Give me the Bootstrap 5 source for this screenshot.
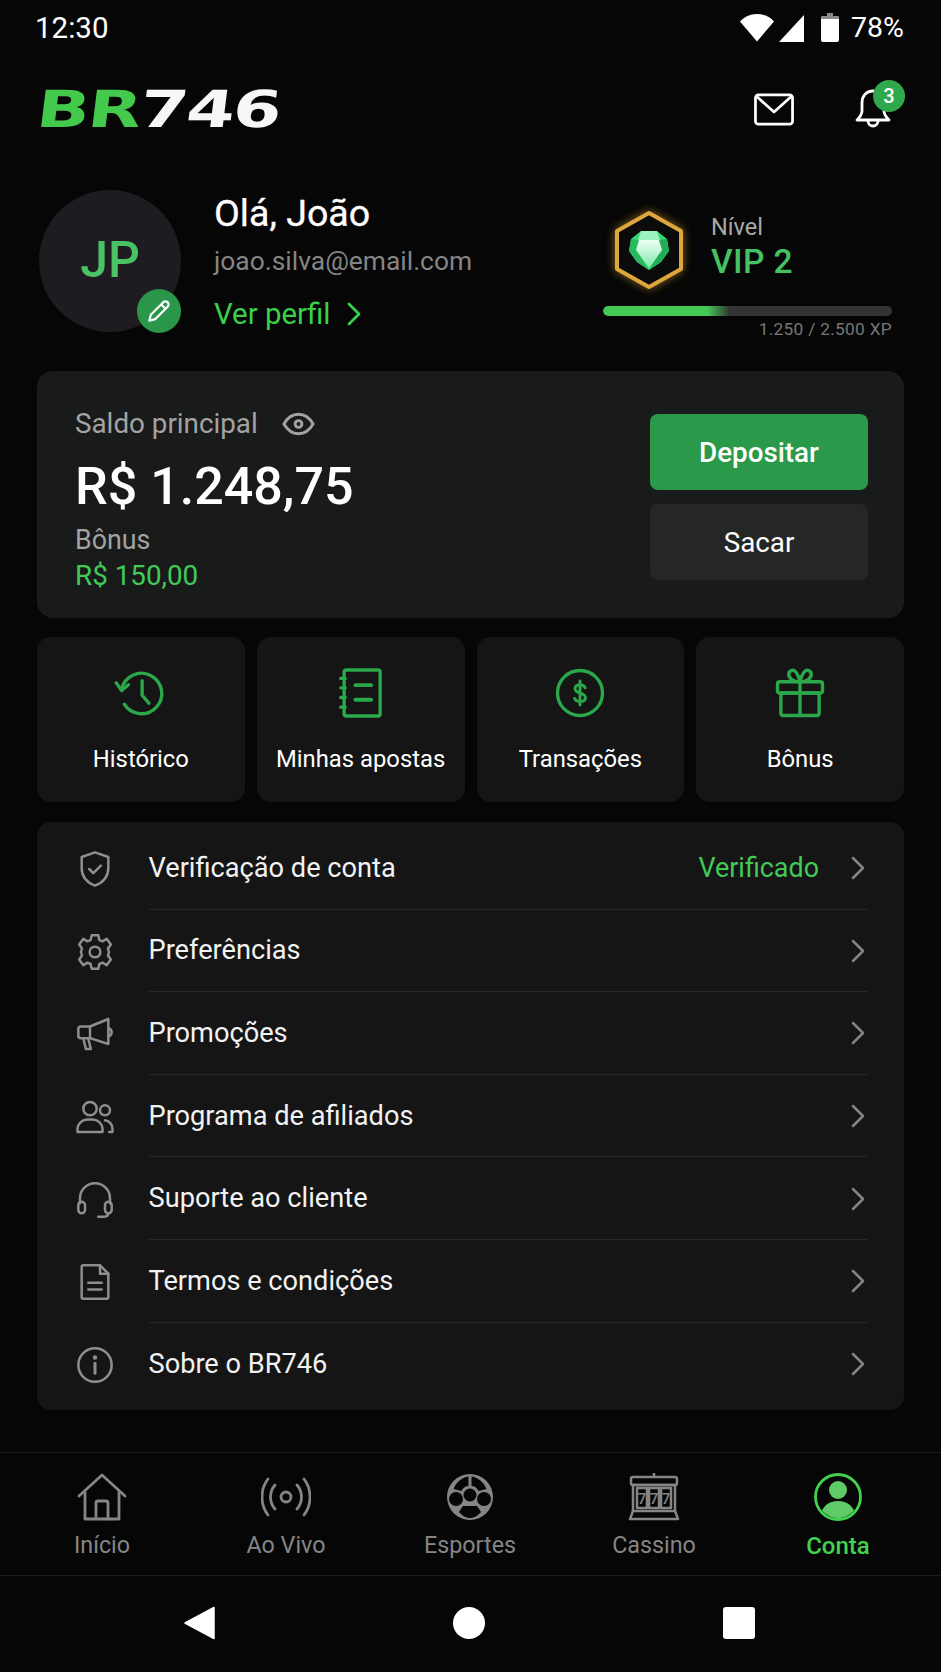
<!DOCTYPE html>
<html lang="pt-BR">
<head>
    <meta charset="UTF-8">
    <meta name="viewport" content="width=device-width, initial-scale=1.0">
    <title>BR746 - Conta</title>
    <link href="https://cdn.jsdelivr.net/npm/bootstrap@5.3.0/dist/css/bootstrap.min.css" rel="stylesheet">
    <style>
        body {
            background-color: #060606;
            color: #f4f4f4;
            font-family: Roboto, "Liberation Sans", sans-serif;
        }
        .app-screen { width: 941px; height: 1672px; overflow: hidden; }
        .status-row { height: 54px; padding: 2px 37px 0 35px; font-size: 29.5px; color: #fff; }
        .status-row .pct { font-size: 28.5px; margin-left: 12px; }
        .top-head { height: 136px; padding: 0 37px 0 37px; padding-bottom: 25px; }
        .brand-logo {
            font-family: "DejaVu Sans", sans-serif;
            font-weight: 700;
            font-size: 51px;
            line-height: 1;
            letter-spacing: -1.5px;
            transform: skewX(-7deg) scaleX(1.37);
            transform-origin: left center;
            color: #f6f6f6;
        }
        .brand-logo span { color: #43c94b; }
        .bell-wrap { position: relative; width: 36px; height: 40px; margin-left: 61px; margin-right: 13px; }
        .bell-count {
            position: absolute;
            top: -9px;
            left: 18px;
            width: 32px;
            height: 32px;
            border-radius: 50%;
            background: #2fa84c;
            font-size: 20px;
            font-weight: 500;
            color: #fff;
        }
        .content-wrap { padding: 0 37px; }
        .profile-row { height: 181px; }
        .avatar-circle {
            position: relative;
            width: 142px;
            height: 142px;
            margin-left: 2px;
            border-radius: 50%;
            background: #1f1c21;
            color: #4bc265;
            font-size: 50px;
            font-weight: 500;
            flex-shrink: 0;
        }
        .avatar-edit {
            position: absolute;
            right: 0;
            bottom: -1px;
            width: 44px;
            height: 44px;
            border-radius: 50%;
            background: #2a964a;
        }
        .profile-info { margin-left: 33px; }
        .hello-name { font-size: 37.6px; line-height: 46px; color: #fff; -webkit-text-stroke: .3px #fff; }
        .hello-mail { font-size: 26.4px; line-height: 30px; margin-top: 10px; color: #858585; }
        .hello-link { font-size: 29.4px; line-height: 34px; margin-top: 21px; color: #3cd04a; }
        .level-box { width: 289px; margin-right: 12px; margin-left: auto; margin-top: 20px; }
        .level-top { padding-left: 11px; height: 96px; }
        .level-gem { filter: drop-shadow(0 0 5px rgba(240, 180, 50, .55)); }
        .level-info { margin-left: 27px; }
        .level-label { font-size: 23.5px; line-height: 28px; margin-top: 3px; color: #a8a8a8; }
        .level-name { font-size: 33.5px; font-weight: 500; line-height: 40px; margin-top: 1px; color: #45c263; letter-spacing: .4px; }
        .xp-track { height: 10px; border-radius: 5px; background: #333; }
        .xp-fill { background: linear-gradient(90deg, #43c956 0, #43c956 82%, #333 100%); border-radius: 5px; }
        .xp-text { font-size: 17.3px; line-height: 20px; margin-top: 3px; color: #777; letter-spacing: .3px; }
        .balance-panel {
            height: 247px;
            padding: 37px 36px 0 38px;
            background: #191b1b;
            border: 0;
            border-radius: 16px;
        }
        .balance-label { font-size: 27.8px; line-height: 32px; color: #a3a3a3; }
        .balance-main { font-size: 52px; font-weight: 500; line-height: 60px; margin-top: 17px; color: #fff; }
        .bonus-label { font-size: 26.8px; line-height: 30px; margin-top: 8px; color: #a3a3a3; }
        .bonus-value { font-size: 27.8px; line-height: 30px; margin-top: 6px; color: #42c957; }
        .balance-btns { width: 218px; margin-top: 6px; gap: 14px; }
        .balance-btns .btn { height: 76px; border: 0; border-radius: 8px; font-size: 27.8px; color: #fff; padding-top: 7px; }
        .btn-deposit { background: #2a9a4a; font-weight: 500; }
        .btn-withdraw { background: #252626; }
        .quick-grid { gap: 12px; margin-top: 19px; }
        .quick-tile {
            flex: 1 1 0;
            height: 165px;
            padding-top: 29px;
            background: #151515;
            border: 0;
            border-radius: 14px;
            color: #fff;
            font-size: 23.8px;
        }
        .quick-tile svg { margin-bottom: 22px; }
        .menu-panel {
            margin-top: 20px;
            padding: 5px 36px 5px 38px;
            background: #151515;
            border-radius: 14px;
            --bs-list-group-bg: transparent;
        }
        .menu-row {
            height: 82.6px;
            padding: 0;
            background: transparent;
            color: #f2f2f2;
            font-size: 27.2px;
        }
        .menu-row .row-ico { width: 73.5px; flex-shrink: 0; }
        .menu-row .row-text { flex: 1 1 auto; height: 100%; padding-top: 1px; border-bottom: 1px solid #272727; }
        .menu-row:last-child .row-text { border-bottom: 0; }
        .ok-tag { color: #42c957; font-size: 26.9px; margin-right: 31px; }
        .ok-chevron { margin-right: 3px; }
        .tab-bar {
            height: 124px;
            margin-top: 42px;
            padding: 0 10px;
            border-top: 1px solid #1d1d1d;
            border-bottom: 1px solid #1d1d1d;
        }
        .tab-item { width: 184px; padding-top: 20px; color: #858585; font-size: 23.3px; }
        .tab-item svg { display: block; margin-bottom: 7px; }
        .tab-item.active-tab { color: #43d24e; font-weight: 500; font-size: 24px; }
        .sys-nav { height: 96px; padding-bottom: 2px; padding-left: 184px; padding-right: 186px; }
    </style>
</head>
<body>
<div class="app-screen d-flex flex-column">

    <!-- status bar -->
    <div class="status-row d-flex align-items-center justify-content-between">
        <div>12:30</div>
        <div class="d-flex align-items-center">
            <svg width="34" height="28" viewBox="0 0 34 28"><path d="M17 27.5 0 7.5C4 3 10 0 17 0s13 3 17 7.5z" fill="#fff"/></svg>
            <svg class="ms-1" width="27" height="28" viewBox="0 0 27 28"><path d="M26 1v27H1z" fill="#fff"/></svg>
            <svg class="ms-3" width="18" height="29" viewBox="0 0 18 29"><path d="M6 0h6v3h4a2 2 0 0 1 2 2v22a2 2 0 0 1-2 2H2a2 2 0 0 1-2-2V5a2 2 0 0 1 2-2h4z" fill="#fff"/><path d="M6 0h6v3h4a2 2 0 0 1 2 2v1H0V5a2 2 0 0 1 2-2h4z" fill="#8a8a8a"/></svg>
            <span class="pct">78%</span>
        </div>
    </div>

    <!-- header -->
    <div class="top-head d-flex align-items-center justify-content-between">
        <div class="brand-logo"><span>BR</span>746</div>
        <div class="d-flex align-items-center">
            <svg width="40" height="33" viewBox="0 0 41 33" fill="none" stroke="#fff" stroke-width="2.8" stroke-linejoin="round" stroke-linecap="round"><rect x="1.5" y="1.5" width="38" height="30" rx="3"/><path d="M2.5 3 20.5 19 38.5 3"/></svg>
            <div class="bell-wrap">
                <svg width="36" height="40" viewBox="0 0 36 40" fill="none" stroke="#fff" stroke-width="2.8" stroke-linejoin="round" stroke-linecap="round"><path d="M18 2C11 2 7 7 7 14v8c0 4-2 6-5 9h32c-3-3-5-5-5-9v-8c0-7-4-12-11-12z"/><path d="M13 32a5 5 0 0 0 10 0"/></svg>
                <div class="bell-count d-flex align-items-center justify-content-center">3</div>
            </div>
        </div>
    </div>

    <div class="content-wrap">
        <!-- profile -->
        <div class="profile-row d-flex">
            <div class="avatar-circle d-flex align-items-center justify-content-center">
                JP
                <div class="avatar-edit d-flex align-items-center justify-content-center">
                    <svg width="26" height="26" viewBox="0 0 24 24" fill="none" stroke="#fff" stroke-width="2" stroke-linejoin="round"><path d="M3 21l1.5-5.500L16 4a2.500 2.500 0 0 1 4 4L8.500 19.500z"/><path d="M14 6l4 4"/></svg>
                </div>
            </div>
            <div class="profile-info">
                <div class="hello-name">Olá, João</div>
                <div class="hello-mail">joao.silva@email.com</div>
                <div class="hello-link d-flex align-items-center">
                    Ver perfil
                    <svg class="ms-3" width="16" height="24" viewBox="0 0 16 24" fill="none" stroke="#3cd04a" stroke-width="2.8" stroke-linecap="round" stroke-linejoin="round"><path d="M3 2l10 10L3 22"/></svg>
                </div>
            </div>
            <div class="level-box">
                <div class="level-top d-flex">
                    <svg class="level-gem" width="70" height="80" viewBox="0 0 70 80">
                        <defs>
                            <linearGradient id="gemTable" x1="0" y1="0" x2="0" y2="1"><stop offset="0" stop-color="#effff5"/><stop offset="1" stop-color="#7fe9a8"/></linearGradient>
                        </defs>
                        <path d="M35 3 67 21V59L35 77 3 59V21z" fill="#0b0b0b" stroke="#dea63c" stroke-width="4" stroke-linejoin="round"/>
                        <path d="M27 21H43L53 29 55 41 47 52 35 60 23 52 15 41 17 29z" fill="#35d873"/>
                        <path d="M17 29 26 30 23 41 35 60 23 52 15 41z" fill="#28b860"/>
                        <path d="M53 29 44 30 47 41 35 60 47 52 55 41z" fill="#25ac59"/>
                        <path d="M27 21H43L46 30H24z" fill="#9df3bd"/>
                        <path d="M25 30H45L48 40 35 58 22 40z" fill="url(#gemTable)"/>
                    </svg>
                    <div class="level-info">
                        <div class="level-label">Nível</div>
                        <div class="level-name">VIP 2</div>
                    </div>
                </div>
                <div class="progress xp-track">
                    <div class="progress-bar xp-fill" style="width: 44%"></div>
                </div>
                <div class="xp-text text-end">1.250 / 2.500 XP</div>
            </div>
        </div>

        <!-- saldo -->
        <div class="card balance-panel flex-row justify-content-between">
            <div>
                <div class="balance-label d-flex align-items-center">
                    Saldo principal
                    <svg class="ms-4" width="33" height="24" viewBox="0 0 34 24" fill="none" stroke="#a3a3a3" stroke-width="3"><path d="M2 12C6 5 11 2 17 2s11 3 15 10c-4 7-9 10-15 10S6 19 2 12z"/><circle cx="17" cy="12" r="3.500"/></svg>
                </div>
                <div class="balance-main">R$ 1.248,75</div>
                <div class="bonus-label">Bônus</div>
                <div class="bonus-value">R$ 150,00</div>
            </div>
            <div class="balance-btns d-flex flex-column">
                <button class="btn btn-deposit" type="button">Depositar</button>
                <button class="btn btn-withdraw" type="button">Sacar</button>
            </div>
        </div>

        <!-- atalhos -->
        <div class="quick-grid d-flex">
            <div class="card quick-tile align-items-center">
                <svg width="54" height="54" viewBox="0 0 24 24" fill="none" stroke="#2aa84a" stroke-width="1.5" stroke-linecap="round" stroke-linejoin="round"><path d="M3.400 10.400A9 9 0 1 1 4.600 17"/><path d="M1 7.500l2.400 3.400 3-2.600"/><path d="M12.500 6.500v6.500l3 3.500"/></svg>
                Histórico
            </div>
            <div class="card quick-tile align-items-center">
                <svg width="54" height="54" viewBox="0 0 24 24" fill="none" stroke="#2aa84a" stroke-width="1.5" stroke-linecap="round" stroke-linejoin="round"><rect x="4.500" y="1.800" width="16" height="20.400" rx="1"/><path d="M9.500 8.500h7M9.500 15h7" stroke-width="1.700"/><path d="M3 5.500h2M3 9.700h2M3 14h2M3 18.300h2"/></svg>
                Minhas apostas
            </div>
            <div class="card quick-tile align-items-center">
                <svg width="54" height="54" viewBox="0 0 24 24" fill="none" stroke="#2aa84a" stroke-width="1.5" stroke-linecap="round" stroke-linejoin="round"><circle cx="12" cy="12" r="10"/><path d="M14.300 9.700c-.4-1-1.200-1.400-2.300-1.400-1.200 0-2.200.7-2.200 1.800 0 2.500 4.600 1.400 4.600 3.900 0 1.200-1.100 1.800-2.400 1.800-1.100 0-2-.5-2.400-1.400M12 6.700v10.600" stroke-width="1.300"/></svg>
                Transações
            </div>
            <div class="card quick-tile align-items-center">
                <svg width="54" height="54" viewBox="0 0 24 24" fill="none" stroke="#2aa84a" stroke-width="1.5" stroke-linecap="round" stroke-linejoin="round"><rect x="2" y="7" width="20" height="5" rx="1"/><rect x="3.500" y="12" width="17" height="10" rx="1"/><path d="M12 7v15"/><path d="M12 7C9 7 7 5.500 7 3.700 7 2 9 1.400 10 2.500 11.200 3.800 12 7 12 7zM12 7c3 0 5-1.500 5-3.300C17 2 15 1.400 14 2.500 12.800 3.800 12 7 12 7z"/></svg>
                Bônus
            </div>
        </div>

        <!-- menu -->
        <div class="list-group menu-panel">
            <div class="list-group-item menu-row d-flex align-items-center border-0">
                <div class="row-ico"><svg width="40" height="40" viewBox="0 0 24 24" fill="none" stroke="#8e8e8e" stroke-width="1.5" stroke-linecap="round" stroke-linejoin="round"><path d="M12 2 4 4.800v6.700c0 5 3.400 8.600 8 10.500 4.600-1.900 8-5.500 8-10.500V4.800z"/><path d="M8.500 12l2.500 2.500 4.500-4.500"/></svg></div>
                <div class="row-text d-flex align-items-center justify-content-between">
                    <span>Verificação de conta</span>
                    <span class="d-flex align-items-center"><span class="ok-tag">Verificado</span><svg class="ok-chevron" width="15" height="24" viewBox="0 0 15 24" fill="none" stroke="#858585" stroke-width="2.500" stroke-linecap="round" stroke-linejoin="round"><path d="M3 2l10 10L3 22"/></svg></span>
                </div>
            </div>
            <div class="list-group-item menu-row d-flex align-items-center border-0">
                <div class="row-ico"><svg width="40" height="40" viewBox="0 0 24 24" fill="none" stroke="#8e8e8e" stroke-width="1.5" stroke-linecap="round" stroke-linejoin="round"><circle cx="12" cy="12" r="3.200"/><path d="M10 2h4l.6 2.800 1.900.8L19 4.100 21.500 7.500 19.800 9.900l.3 1.100.3 1-.3 1-.3 1.100 1.700 2.400L19 19.900l-2.500-1.500-1.900.8L14 22h-4l-.6-2.800-1.900-.8L5 19.900 2.500 16.500 4.200 14.100 3.600 12l.6-2.100L2.500 7.500 5 4.100l2.500 1.500 1.900-.8z"/></svg></div>
                <div class="row-text d-flex align-items-center justify-content-between">
                    <span>Preferências</span>
                    <svg class="ok-chevron" width="15" height="24" viewBox="0 0 15 24" fill="none" stroke="#858585" stroke-width="2.500" stroke-linecap="round" stroke-linejoin="round"><path d="M3 2l10 10L3 22"/></svg>
                </div>
            </div>
            <div class="list-group-item menu-row d-flex align-items-center border-0">
                <div class="row-ico"><svg width="40" height="40" viewBox="0 0 24 24" fill="none" stroke="#8e8e8e" stroke-width="1.5" stroke-linecap="round" stroke-linejoin="round"><path d="M9 7.500 20 3v15L9 14.500H3.500A1.500 1.500 0 0 1 2 13V9a1.500 1.500 0 0 1 1.500-1.500z"/><path d="M9 7.500v7M20 8.500c1.500.5 2 1.500 2 2.500s-.5 2-2 2.500"/><path d="M5 14.500l1.500 6.500h3L8 15"/></svg></div>
                <div class="row-text d-flex align-items-center justify-content-between">
                    <span>Promoções</span>
                    <svg class="ok-chevron" width="15" height="24" viewBox="0 0 15 24" fill="none" stroke="#858585" stroke-width="2.500" stroke-linecap="round" stroke-linejoin="round"><path d="M3 2l10 10L3 22"/></svg>
                </div>
            </div>
            <div class="list-group-item menu-row d-flex align-items-center border-0">
                <div class="row-ico"><svg width="40" height="40" viewBox="0 0 24 24" fill="none" stroke="#8e8e8e" stroke-width="1.5" stroke-linecap="round" stroke-linejoin="round"><circle cx="9" cy="7" r="4"/><circle cx="18" cy="8" r="3"/><path d="M1.500 21v-2a6 6 0 0 1 6-5.500h3a6 6 0 0 1 6 5.500v2z"/><path d="M18 14a5 5 0 0 1 4.500 5v2h-2"/></svg></div>
                <div class="row-text d-flex align-items-center justify-content-between">
                    <span>Programa de afiliados</span>
                    <svg class="ok-chevron" width="15" height="24" viewBox="0 0 15 24" fill="none" stroke="#858585" stroke-width="2.500" stroke-linecap="round" stroke-linejoin="round"><path d="M3 2l10 10L3 22"/></svg>
                </div>
            </div>
            <div class="list-group-item menu-row d-flex align-items-center border-0">
                <div class="row-ico"><svg width="40" height="40" viewBox="0 0 24 24" fill="none" stroke="#8e8e8e" stroke-width="1.5" stroke-linecap="round" stroke-linejoin="round"><path d="M3 14v-3a9 9 0 0 1 18 0v3"/><rect x="2" y="13" width="4" height="7" rx="2"/><rect x="18" y="13" width="4" height="7" rx="2"/><path d="M20 20c0 1.500-1 2-2.500 2H14"/></svg></div>
                <div class="row-text d-flex align-items-center justify-content-between">
                    <span>Suporte ao cliente</span>
                    <svg class="ok-chevron" width="15" height="24" viewBox="0 0 15 24" fill="none" stroke="#858585" stroke-width="2.500" stroke-linecap="round" stroke-linejoin="round"><path d="M3 2l10 10L3 22"/></svg>
                </div>
            </div>
            <div class="list-group-item menu-row d-flex align-items-center border-0">
                <div class="row-ico"><svg width="40" height="40" viewBox="0 0 24 24" fill="none" stroke="#8e8e8e" stroke-width="1.5" stroke-linecap="round" stroke-linejoin="round"><path d="M4 3a1 1 0 0 1 1-1h10l5 5v14a1 1 0 0 1-1 1H5a1 1 0 0 1-1-1z"/><path d="M15 2v5h5M8 12.500h8M8 16.500h8"/></svg></div>
                <div class="row-text d-flex align-items-center justify-content-between">
                    <span>Termos e condições</span>
                    <svg class="ok-chevron" width="15" height="24" viewBox="0 0 15 24" fill="none" stroke="#858585" stroke-width="2.500" stroke-linecap="round" stroke-linejoin="round"><path d="M3 2l10 10L3 22"/></svg>
                </div>
            </div>
            <div class="list-group-item menu-row d-flex align-items-center border-0">
                <div class="row-ico"><svg width="40" height="40" viewBox="0 0 24 24" fill="none" stroke="#8e8e8e" stroke-width="1.5" stroke-linecap="round" stroke-linejoin="round"><circle cx="12" cy="12" r="10"/><path d="M12 11v6" stroke-width="1.800"/><circle cx="12" cy="7.500" r=".6"/></svg></div>
                <div class="row-text d-flex align-items-center justify-content-between">
                    <span>Sobre o BR746</span>
                    <svg class="ok-chevron" width="15" height="24" viewBox="0 0 15 24" fill="none" stroke="#858585" stroke-width="2.500" stroke-linecap="round" stroke-linejoin="round"><path d="M3 2l10 10L3 22"/></svg>
                </div>
            </div>
        </div>
    </div>

    <!-- tabs -->
    <div class="tab-bar d-flex">
        <div class="tab-item d-flex flex-column align-items-center">
            <svg width="50" height="48" viewBox="0 0 50 48" fill="none" stroke="#858585" stroke-width="2.800" stroke-linecap="round" stroke-linejoin="round"><path d="M2 23 25 2l23 21"/><path d="M8 19v27h34V19"/><path d="M19 46V30a2 2 0 0 1 2-2h8a2 2 0 0 1 2 2v16"/></svg>
            Início
        </div>
        <div class="tab-item d-flex flex-column align-items-center">
            <svg width="50" height="48" viewBox="0 0 50 48" fill="none" stroke="#858585" stroke-width="2.800" stroke-linecap="round"><circle cx="25" cy="24" r="5"/><path d="M14 12C8 19 8 29 14 36M36 12c6 7 6 17 0 24M7 6C-1 16-1 32 7 42M43 6c8 10 8 26 0 36"/></svg>
            Ao Vivo
        </div>
        <div class="tab-item d-flex flex-column align-items-center">
            <svg width="48" height="48" viewBox="0 0 48 48">
                <circle cx="24" cy="24" r="23" fill="#858585"/>
                <g fill="#060606">
                    <circle cx="24" cy="22" r="6.500"/>
                    <circle cx="10" cy="26" r="7"/>
                    <circle cx="38" cy="26" r="7"/>
                    <path d="M17 33.500h14l3.500 5.500c-2.500 3-6 5.500-10.500 5.500s-8-2.500-10.500-5.500z" stroke="#060606" stroke-width="1" stroke-linejoin="round"/>
                    <path d="M22.500 3.500v9.500c-3 0-6 2-7 5l-8-2c2.500-6.500 8-11.500 15-12.500z"/>
                    <path d="M25.500 3.500v9.500c3 0 6 2 7 5l8-2c-2.500-6.500-8-11.500-15-12.500z"/>
                </g>
            </svg>
            Esportes
        </div>
        <div class="tab-item d-flex flex-column align-items-center">
            <svg width="52" height="48" viewBox="0 0 52 48" fill="none" stroke="#858585" stroke-width="2.500" stroke-linejoin="round"><path d="M26 0v4"/><rect x="3" y="4" width="46" height="8" rx="2"/><rect x="5" y="12" width="42" height="26"/><rect x="9" y="15" width="10" height="20"/><rect x="21" y="15" width="10" height="20"/><rect x="33" y="15" width="10" height="20"/><path d="M5 38 2 46h48l-3-8"/><text x="14" y="31" text-anchor="middle" font-family="Roboto, sans-serif" font-size="15" font-weight="500" fill="#858585" stroke="none">7</text><text x="26" y="31" text-anchor="middle" font-family="Roboto, sans-serif" font-size="15" font-weight="500" fill="#858585" stroke="none">7</text><text x="38" y="31" text-anchor="middle" font-family="Roboto, sans-serif" font-size="15" font-weight="500" fill="#858585" stroke="none">7</text></svg>
            Cassino
        </div>
        <div class="tab-item active-tab d-flex flex-column align-items-center">
            <svg width="50" height="48" viewBox="0 0 50 48"><defs><clipPath id="accClip"><circle cx="25" cy="24" r="21"/></clipPath></defs><circle cx="25" cy="24" r="22.500" fill="none" stroke="#43d24e" stroke-width="2.800"/><g clip-path="url(#accClip)" fill="#5ecb68"><circle cx="25" cy="17" r="9"/><path d="M7 48c0-14 8-20 18-20s18 6 18 20z"/></g></svg>
            Conta
        </div>
    </div>

    <!-- android nav -->
    <div class="sys-nav d-flex align-items-center justify-content-between">
        <svg width="31" height="34" viewBox="0 0 31 34"><path d="M30 1.500v31L1 17z" fill="#fff" stroke="#fff" stroke-width="1.500" stroke-linejoin="round"/></svg>
        <svg width="32" height="32" viewBox="0 0 32 32"><circle cx="16" cy="16" r="16" fill="#fff"/></svg>
        <svg width="32" height="32" viewBox="0 0 32 32"><rect width="32" height="32" rx="3" fill="#fff"/></svg>
    </div>
</div>
<script src="https://cdn.jsdelivr.net/npm/bootstrap@5.3.0/dist/js/bootstrap.bundle.min.js"></script>
</body>
</html>
